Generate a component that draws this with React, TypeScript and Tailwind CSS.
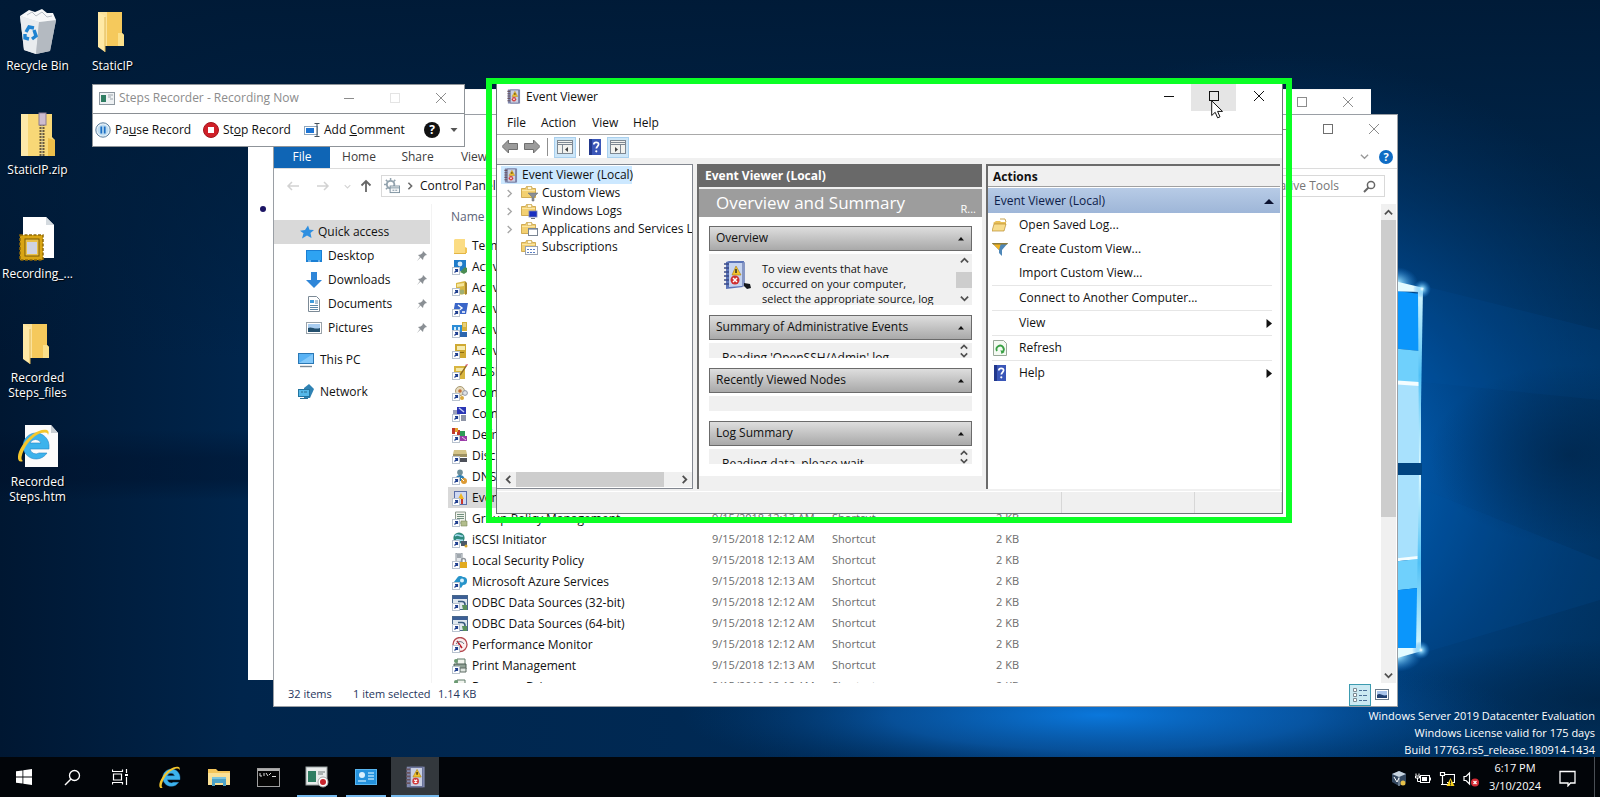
import React from "react";

type P = { children?: React.ReactNode };

/* ---------- small shared pieces ---------- */

function Svg({ size = 16, box = 16, children }: P & { size?: number; box?: number }) {
  return (
    <svg width={size} height={size} viewBox={`0 0 ${box} ${box}`} className="block shrink-0" aria-hidden="true">
      {children}
    </svg>
  );
}

function Minimise({ color }: { color: string }) {
  return (
    <Svg size={12} box={12}>
      <path d="M1 6.5h10" stroke={color} />
    </Svg>
  );
}
function Maximise({ color }: { color: string }) {
  return (
    <Svg size={12} box={12}>
      <rect x="1.5" y="1.5" width="9" height="9" fill="none" stroke={color} />
    </Svg>
  );
}
function Close({ color }: { color: string }) {
  return (
    <Svg size={12} box={12}>
      <path d="M1 1l10 10M11 1L1 11" stroke={color} />
    </Svg>
  );
}

function Chevron({ dir, color = "#505050", size = 10, w = 2 }: { dir: "up" | "down" | "left" | "right"; color?: string; size?: number; w?: number }) {
  const d = {
    up: "M1 7l4-4 4 4",
    down: "M1 3l4 4 4-4",
    left: "M7 1L3 5l4 4",
    right: "M3 1l4 4-4 4",
  }[dir];
  return (
    <Svg size={size} box={10}>
      <path d={d} fill="none" stroke={color} strokeWidth={w} />
    </Svg>
  );
}

/* ---------- wallpaper ---------- */

function Wallpaper() {
  return (
    <svg className="absolute inset-0 h-full w-full" viewBox="0 0 1600 797" preserveAspectRatio="none" aria-hidden="true">
      <defs>
        <linearGradient id="base" x1="0" y1="0" x2="1" y2="0">
          <stop offset="0" stopColor="#001732" />
          <stop offset="0.15" stopColor="#00254c" />
          <stop offset="0.5" stopColor="#002a55" />
          <stop offset="1" stopColor="#00305c" />
        </linearGradient>
        <linearGradient id="top" x1="0" y1="0" x2="0" y2="1">
          <stop offset="0" stopColor="#001a36" stopOpacity="0.95" />
          <stop offset="0.25" stopColor="#001d3b" stopOpacity="0.6" />
          <stop offset="0.45" stopColor="#001d3b" stopOpacity="0" />
        </linearGradient>
        <radialGradient id="glow" cx="1280" cy="470" r="420" gradientUnits="userSpaceOnUse">
          <stop offset="0" stopColor="#0a7ae0" />
          <stop offset="0.45" stopColor="#004f9c" stopOpacity="0.8" />
          <stop offset="1" stopColor="#003468" stopOpacity="0" />
        </radialGradient>
        <radialGradient id="under">
          <stop offset="0" stopColor="#0b7be2" stopOpacity="0.95" />
          <stop offset="0.5" stopColor="#0a5fb4" stopOpacity="0.7" />
          <stop offset="1" stopColor="#003c78" stopOpacity="0" />
        </radialGradient>
        <radialGradient id="shade">
          <stop offset="0" stopColor="#001832" stopOpacity="0.45" />
          <stop offset="1" stopColor="#001832" stopOpacity="0" />
        </radialGradient>
        <linearGradient id="band" x1="0" y1="0" x2="0" y2="1">
          <stop offset="0" stopColor="#000f28" stopOpacity="0" />
          <stop offset="0.4" stopColor="#000f28" stopOpacity="0.4" />
          <stop offset="0.7" stopColor="#000f28" stopOpacity="0.4" />
          <stop offset="1" stopColor="#000f28" stopOpacity="0" />
        </linearGradient>
        <radialGradient id="flare">
          <stop offset="0" stopColor="#ffffff" />
          <stop offset="0.25" stopColor="#8fdcff" stopOpacity="0.8" />
          <stop offset="1" stopColor="#1a86e8" stopOpacity="0" />
        </radialGradient>
        <linearGradient id="edge" x1="0" y1="0" x2="0" y2="1">
          <stop offset="0" stopColor="#d9f8ff" />
          <stop offset="0.5" stopColor="#4fc0f5" />
          <stop offset="1" stopColor="#d9f8ff" />
        </linearGradient>
      </defs>
      <rect width="1600" height="797" fill="url(#base)" />
      <rect y="430" width="420" height="70" fill="url(#band)" />
      <rect width="1600" height="797" fill="url(#top)" />
      <rect width="1600" height="797" fill="url(#glow)" />
      <path d="M1400 280L1600 330V400L1400 380Z" fill="#0058aa" opacity="0.12" />
      <path d="M1400 480L1600 560V600L1400 660Z" fill="#0058aa" opacity="0.15" />
      <ellipse cx="1570" cy="455" rx="140" ry="90" fill="url(#shade)" />
      <ellipse cx="1600" cy="700" rx="220" ry="60" fill="url(#shade)" />
      <ellipse cx="1100" cy="715" rx="420" ry="70" fill="url(#under)" />
      <ellipse cx="1396" cy="283" rx="22" ry="16" fill="url(#flare)" />
      <ellipse cx="1396" cy="656" rx="26" ry="16" fill="url(#flare)" />
      <path d="M1390 290L1420 294V351L1390 348Z" fill="#0b96fb" />
      <path d="M1390 348L1420 351V383L1390 381Z" fill="#6fd0fc" />
      <path d="M1390 384H1421V463H1390Z" fill="#a8e1fd" />
      <path d="M1390 380L1419 382V386L1390 384Z" fill="#f4fdff" />
      <rect x="1390" y="463" width="32" height="12" fill="#014480" />
      <path d="M1390 475H1421V560H1390Z" fill="#a8e1fd" />
      <path d="M1390 559L1418 556V559L1390 562Z" fill="#f4fdff" />
      <path d="M1390 562L1418 559V588L1390 591Z" fill="#6fd0fc" />
      <path d="M1390 591L1418 588V648L1390 649Z" fill="#0b96fb" />
      <path d="M1418 290L1423 288L1420 463H1419Z" fill="url(#edge)" />
      <path d="M1419 475H1421L1421 651L1416 649Z" fill="url(#edge)" />
      <path d="M1390 280L1424 288L1420 292L1390 291Z" fill="#e4fbff" />
      <path d="M1390 648L1421 648L1422 651L1390 660Z" fill="#e4fbff" />
      <circle cx="1422" cy="289" r="9" fill="url(#flare)" />
      <circle cx="1421" cy="650" r="9" fill="url(#flare)" />
    </svg>
  );
}

/* ---------- desktop icons ---------- */

function RecycleBin() {
  return (
    <Svg size={46} box={46}>
      <path d="M5 8L41 12L35 43L21 46L9 42Z" fill="#c9ced4" />
      <path d="M5 8L24 14L21 46L9 42Z" fill="#e9ecef" />
      <path d="M24 14L41 12L35 43L21 46Z" fill="#b4bac1" />
      <path d="M5 8L14 2L20 4L27 1L32 5L38 5L41 12L24 14Z" fill="#f7f8f9" />
      <path d="M12 7l5-3 4 4 6-4 5 5 5-1" fill="none" stroke="#b9bfc6" />
      <g fill="none" stroke="#1f83d1" strokeWidth="3.4">
        <path d="M11 24L14 19L19 20" />
        <path d="M19 22L21 28L17 31" />
        <path d="M14 31L10 30L10 26" />
      </g>
    </Svg>
  );
}
function BigFolder() {
  return (
    <Svg size={46} box={46}>
      <g transform="translate(-5 1)">
        <path d="M13 3H37V24L39 26V37H13Z" fill="#f5c95c" />
        <path d="M13 3H22V37H13Z" fill="#fbe29a" />
        <path d="M37 24L39 26V37H33V24Z" fill="#fbe08a" />
        <path d="M13 3L20 7V43L13 38Z" fill="#ffe9a6" />
        <path d="M20 8V43" stroke="#dfb654" />
      </g>
    </Svg>
  );
}
function ZipFolder() {
  return (
    <Svg size={46} box={46}>
      <path d="M6 2H37V25L40 28V44H6Z" fill="#f8d877" />
      <path d="M6 2H13V44H6Z" fill="#fde9a9" />
      <path d="M33 26L40 28V44H33Z" fill="#eebf4a" />
      <path d="M27 12V44" stroke="#6b5a3a" strokeWidth="5" strokeDasharray="2 1" />
      <path d="M27 12V44" stroke="#d8cfa4" strokeWidth="1" />
      <rect x="24" y="1" width="7" height="12" fill="#cdbcd0" stroke="#8c7d92" />
    </Svg>
  );
}
function Recording() {
  return (
    <Svg size={46} box={46}>
      <path d="M8 1H31L39 9V42H8Z" fill="#fff" />
      <path d="M31 1V9H39Z" fill="#d4dadf" />
      <rect x="5" y="19" width="23" height="25" fill="#d9a514" stroke="#8f6a08" strokeWidth="1.5" strokeDasharray="3 1.5" />
      <rect x="10" y="23" width="14" height="17" fill="#e9c04a" stroke="#7d5d06" />
      <rect x="12" y="26" width="10" height="12" fill="#cfd3e4" />
    </Svg>
  );
}
function IeMark() {
  return (
    <>
      <path d="M36 21A13 13 0 1 0 34 29H26A6 6 0 0 1 17 25H36Z M17 19A6 6 0 0 1 28 19Z" fill="#3db3ec" fillRule="evenodd" stroke="#2586c7" strokeWidth="0.6" />
      <path d="M10 37C4 40 3 31 9 22C16 11 27 4 34 6C36 7 36 9 35 11C35 8 32 8 28 9C20 12 13 20 10 28C8 33 8 36 10 37Z" fill="#f4c62c" />
    </>
  );
}
function HtmFile() {
  return (
    <Svg size={46} box={46}>
      <path d="M10 1H36L43 9V43H10Z" fill="#fbfbfb" />
      <path d="M36 1V9H43Z" fill="#c8ced3" />
      <g transform="translate(-2 0)">
        <IeMark />
      </g>
    </Svg>
  );
}

function DesktopIcon({ icon, label }: { icon: React.ReactNode; label: string }) {
  return (
    <button className="flex h-[104px] w-[75px] flex-col items-center gap-1 text-center text-white">
      {icon}
      <span className="w-[72px] leading-[15px] whitespace-pre-line [text-shadow:1px_1px_1px_#000]">{label}</span>
    </button>
  );
}

/* ---------- steps recorder ---------- */

function StepsRecorder() {
  return (
    <section className="absolute top-[84px] left-[92px] w-[373px] border border-[#8f9499] bg-white">
      <header className="flex h-7 items-center pb-0.5 pl-1.5 text-[#8c8c8c]">
        <Svg size={16}>
          <rect x="0.5" y="2.5" width="15" height="12" fill="#eef1f3" stroke="#8d979f" />
          <rect x="2" y="5" width="5" height="7" fill="#2f7d62" />
          <path d="M9 5h5M9 7h3M11 9h3" stroke="#9aa4ab" />
        </Svg>
        <h2 className="ml-1 flex-1 text-[12px]">Steps Recorder - Recording Now</h2>
        <button aria-label="Minimize" className="grid w-[46px] place-items-center"><Minimise color="#8c8c8c" /></button>
        <button aria-label="Maximize" className="grid w-[46px] place-items-center"><Maximise color="#e4e4e4" /></button>
        <button aria-label="Close" className="grid w-[46px] place-items-center"><Close color="#8c8c8c" /></button>
      </header>
      <div className="flex h-[33px] items-center border-t border-[#8a8f94] pr-1.5 pl-0.5 text-[12px]">
        <button className="flex w-[108px] items-center gap-1">
          <Svg size={16}>
            <circle cx="8" cy="8" r="7.2" fill="#e8f1f8" stroke="#5b7f9e" />
            <circle cx="8" cy="8" r="5.6" fill="#bcdcf2" />
            <path d="M6.3 4.5v7M9.7 4.5v7" stroke="#1c6fc4" strokeWidth="1.8" />
          </Svg>
          <span>Pa<u>u</u>se Record</span>
        </button>
        <button className="flex w-[101px] items-center gap-1">
          <Svg size={16}>
            <circle cx="8" cy="8" r="7.5" fill="#d01f28" stroke="#a3161d" />
            <rect x="5" y="5" width="6" height="6" fill="#fff" />
          </Svg>
          <span>St<u>o</u>p Record</span>
        </button>
        <button className="flex flex-1 items-center gap-1">
          <Svg size={16}>
            <rect x="0.5" y="4.5" width="13" height="8" fill="#fff" stroke="#8fa6bd" />
            <rect x="2" y="6" width="8" height="5" fill="#1d74d4" />
            <path d="M10.5 1.5h5M10.5 14.5h5M13 2v12" stroke="#45515c" />
          </Svg>
          <span>Add <u>C</u>omment</span>
        </button>
        <button aria-label="Help" className="flex items-center gap-2.5">
          <span className="grid size-4 place-items-center rounded-full bg-[#111] text-[12px] leading-4 font-bold text-white">?</span>
          <Svg size={8} box={8}><path d="M0.5 2h7L4 6z" fill="#555" /></Svg>
        </button>
      </div>
    </section>
  );
}

/* ---------- explorer ---------- */

function Shortcut() {
  return (
    <>
      <rect x="0.5" y="8.5" width="7" height="7" fill="#fff" stroke="#b9c3cf" />
      <path d="M2.5 13.5L5 11M3 10.7h2.5V13" fill="none" stroke="#1f3f8f" strokeWidth="1.2" />
    </>
  );
}

function FileGlyph({ kind }: { kind: string }) {
  switch (kind) {
    case "folder":
      return (
        <Svg><path d="M3 1h10v12l1 1v2H2V2z" fill="#fbdc83" /><path d="M13 9v6h2V10z" fill="#f0c455" /><path d="M2 15.5h12" stroke="#e3b545" /></Svg>
      );
    case "center":
      return <Svg><rect x="2" y="1" width="12" height="11" fill="#1f7cc9" /><circle cx="8" cy="5" r="2.4" fill="#d7ecfb" /><path d="M13 8l2 1v4l-3 2-4-2z" fill="#4b8c52" /><Shortcut /></Svg>;
    case "trust":
      return <Svg><path d="M4 3l9-2v13l-9 1z" fill="#d9b843" /><path d="M5 4l7-1v3l-7 1z" fill="#f5e59b" /><path d="M13 1l2 2v11l-2 1z" fill="#a8872a" /><circle cx="10" cy="12" r="2.4" fill="#9fae72" /><Shortcut /></Svg>;
    case "shell":
      return <Svg><path d="M3 2h13l-2 11H1z" fill="#3a66c8" /><path d="M6 4l4 3-4 3M10 11h3" fill="none" stroke="#fff" strokeWidth="1.4" /><Shortcut /></Svg>;
    case "sites":
      return <Svg><rect x="0" y="3" width="10" height="7" fill="#2c8cd6" /><path d="M2 5h2v3H2zM6 5h2v3H6z" fill="#d5ecfb" /><rect x="10" y="0" width="5" height="9" fill="#d5b13c" /><path d="M11 2h3M11 4h3" stroke="#fbf0bd" /><rect x="8" y="10" width="7" height="5" fill="#2d66ae" /><Shortcut /></Svg>;
    case "users":
      return <Svg><path d="M3 1h11v14H3z" fill="#cfa932" /><path d="M5 3h8v4H5z" fill="#f6ebae" /><path d="M7 9h5v1H7z" fill="#8d6d13" /><Shortcut /></Svg>;
    case "adsi":
      return <Svg><path d="M2 2h11v13H2z" fill="#d8b540" /><path d="M4 4h8v3H4z" fill="#f4e8a6" /><path d="M14 1L8 10l-1 2 2-1 6-9z" fill="#8d6a20" /><path d="M13 1l2 1 1-2z" fill="#d2415c" /><Shortcut /></Svg>;
    case "component":
      return <Svg><circle cx="8" cy="6" r="4.5" fill="#e6dcc0" stroke="#a99a72" /><circle cx="8" cy="6" r="1.8" fill="#c26e3a" /><circle cx="13" cy="8" r="2.4" fill="#dfe2e8" stroke="#9196a4" /><circle cx="10" cy="13" r="2" fill="#d9a73d" /><Shortcut /></Svg>;
    case "computer":
      return <Svg><rect x="5" y="1" width="9" height="7" fill="#2b36b5" /><path d="M7 2l5 4" stroke="#c7cdf6" strokeWidth="1.5" /><rect x="1" y="4" width="4" height="4" fill="#9aa0bb" /><rect x="9" y="9" width="5" height="6" fill="#8d93a6" /><Shortcut /></Svg>;
    case "defrag":
      return <Svg><path d="M0 1h3v6H0zM5 3h3v5H5z" fill="#c0392b" /><path d="M3 1h3v4H3z" fill="#e5a32e" /><path d="M8 4h5v5H8z" fill="#2f9b58" /><path d="M8 9h7v5H8z" fill="#9a3aa8" /><path d="M10 10l4 3" stroke="#e9c7ef" /><Shortcut /></Svg>;
    case "disk":
      return <Svg><path d="M2 2h12l1 4H1z" fill="#d5c58a" /><path d="M1 6h14v3H1z" fill="#9f9263" /><path d="M7 10h8v4H7z" fill="#4d5059" /><Shortcut /></Svg>;
    case "dns":
      return <Svg><circle cx="8" cy="3.4" r="2.8" fill="#6d8f9a" /><path d="M3 12c0-8 10-8 10 0z" fill="#2f7fb3" /><circle cx="12" cy="12" r="3" fill="#dc9a34" /><path d="M9 9l3 3" stroke="#fff" /><Shortcut /></Svg>;
    case "event":
      return <Svg><rect x="2.5" y="1.5" width="12" height="13" fill="#cfd9f2" stroke="#5a6ea8" /><path d="M9 3l3 6H6z" fill="#f0b624" /><path d="M10 9v5" stroke="#c9372c" strokeWidth="2" /><Shortcut /></Svg>;
    case "group":
      return <Svg><path d="M3.500 1h10v11h-10z" fill="#f1f2ec" stroke="#8c9a8c" /><path d="M5 3.500h7M5 5.500h7M5 7.500h7" stroke="#6f8f7d" /><path d="M9 10h6v5H9z" fill="#b2bd8c" stroke="#7c8a5c" strokeWidth="0.600" /><Shortcut /></Svg>;
    case "iscsi":
      return <Svg><circle cx="7" cy="6" r="5.6" fill="#2f8a7d" /><path d="M3 4c3-3 5 1 8 0M4 8c3-1 4 1 7 0" stroke="#a7ddf2" fill="none" strokeWidth="1.4" /><path d="M9 9h6v5H9z" fill="#4b5968" /><circle cx="14" cy="14" r="1.5" fill="#d5a52c" /><Shortcut /></Svg>;
    case "security":
      return <Svg><path d="M4 0h6v9H4z" fill="#e6e9ec" stroke="#8b949c" /><path d="M5 2h4M5 4h4" stroke="#59646e" /><rect x="8" y="9" width="7" height="6" fill="#e2aa1e" /><path d="M9.500 9V7.500a2 2 0 0 1 4 0V9" fill="none" stroke="#8f9499" strokeWidth="1.4" /><Shortcut /></Svg>;
    case "azure":
      return <Svg><path d="M5 4a4 4 0 0 1 6-1 3.500 3.500 0 0 1 4 4 4 4 0 0 1-4 4l-2 3-3-2-4-4z" fill="#2793c9" /><circle cx="10" cy="6.500" r="2" fill="#d8f0fb" /><Shortcut /></Svg>;
    case "odbc":
      return <Svg><rect x="0.500" y="0.500" width="15" height="14" fill="#dfe7ee" stroke="#48678c" /><rect x="1" y="1" width="14" height="3" fill="#3c5f96" /><path d="M6 6.500h4a3 3 0 0 1 3 3v2" fill="none" stroke="#375a7d" strokeWidth="1.600" /><path d="M10 10h5v5h-4z" fill="#58905b" /><Shortcut /></Svg>;
    case "perf":
      return <Svg><circle cx="8" cy="7.500" r="7" fill="#fbeeee" stroke="#b4494f" strokeWidth="1.300" /><path d="M5 4l5 7" stroke="#b81f2b" strokeWidth="1.600" /><path d="M4 7a4.500 4.500 0 0 1 8 0" stroke="#6b7783" fill="none" /><Shortcut /></Svg>;
    default:
      return <Svg><path d="M5 1h8v6H5z" fill="#f1f4ee" stroke="#5f7a69" /><path d="M2 6h12v5H2z" fill="#8fa094" stroke="#4d5e54" /><path d="M8 10h6v4H8z" fill="#dfe5e0" stroke="#5d6b62" /><circle cx="4" cy="3" r="2" fill="#6b9a72" /><Shortcut /></Svg>;
  }
}

type FileRow = { kind: string; name: string; date?: string; type?: string; size?: string };

const shortcut = (kind: string, name: string, minute: string): FileRow => ({
  kind,
  name,
  date: `9/15/2018 12:${minute} AM`,
  type: "Shortcut",
  size: "2 KB",
});

const FILES: FileRow[] = [
  { kind: "folder", name: "Terminal" },
  { kind: "center", name: "Active D" },
  { kind: "trust", name: "Active Di" },
  { kind: "shell", name: "Active Dir" },
  { kind: "sites", name: "Active Dire" },
  { kind: "users", name: "Active Direc" },
  { kind: "adsi", name: "ADSI Edit" },
  { kind: "component", name: "Compon" },
  { kind: "computer", name: "Comput" },
  { kind: "defrag", name: "Defrag" },
  { kind: "disk", name: "Disc" },
  { kind: "dns", name: "DNS" },
  { kind: "event", name: "Event" },
  shortcut("group", "Group Policy Management", "13"),
  shortcut("iscsi", "iSCSI Initiator", "12"),
  shortcut("security", "Local Security Policy", "13"),
  shortcut("azure", "Microsoft Azure Services", "13"),
  shortcut("odbc", "ODBC Data Sources (32-bit)", "12"),
  shortcut("odbc", "ODBC Data Sources (64-bit)", "12"),
  shortcut("perf", "Performance Monitor", "12"),
  shortcut("print", "Print Management", "13"),
  shortcut("print", "Recovery Drive", "12"),
];

function Pin() {
  return (
    <Svg size={12} box={12}>
      <path d="M7 1l4 4-2 .5-1.500 2L7 10 4.500 7.500 1 11 4 7 2 5l2.500-.5L6.500 3z" fill="#8a8f94" />
    </Svg>
  );
}

const DesktopGlyph = () => (
  <Svg><rect x="0" y="2" width="16" height="12" fill="#1a7fd4" /><rect x="1" y="3" width="14" height="9" fill="#2ea3f2" /><path d="M2 13h3M12 13h2" stroke="#bfe3fb" /></Svg>
);
const DownGlyph = () => (
  <Svg><path d="M5 0h6v8h5l-8 8-8-8h5z" fill="#2f86d8" /></Svg>
);
const DocGlyph = () => (
  <Svg><path d="M2.500 0.500h8l3 3v12h-11z" fill="#fff" stroke="#7c8a96" /><path d="M4 4h4v3H4z" fill="#3f9bdc" /><path d="M9 5h3M9 7h3M4 9.500h8M4 11.500h8M4 13.500h8" stroke="#5b87a8" /></Svg>
);
const PicGlyph = () => (
  <Svg><rect x="0.500" y="2.500" width="15" height="11" fill="#fff" stroke="#9aa3aa" /><rect x="2" y="4" width="12" height="8" fill="#a9cdf0" /><path d="M2 8c4-2 6 2 12 0v4H2z" fill="#24506e" /></Svg>
);
const PcGlyph = () => (
  <Svg><rect x="0.500" y="1.500" width="15" height="10" fill="#58b2f4" stroke="#2b78b5" /><path d="M1 11L15 2v9z" fill="#82c8fa" /><path d="M2 14.500h12" stroke="#7a8894" strokeWidth="1.400" /></Svg>
);
const NetGlyph = () => (
  <Svg><path d="M6 4l5-4 5 5-4 9H6z" fill="#2f82b3" /><rect x="0.500" y="5.500" width="11" height="7" fill="#55b8e8" stroke="#23749f" /><path d="M2 14.500h8M3 8h2M6 8h3" stroke="#2a6d90" /></Svg>
);
const StarGlyph = () => (
  <Svg size={14} box={14}><path d="M8 .5l1.500 4.300 4.500.2-3.500 3.100 1 4.900L7 10.500 2 13.500l1.500-5.200L0 5.700 5 5z" fill="#2f8fe0" /></Svg>
);

function SideItem({ icon, label, pinned }: { icon: React.ReactNode; label: string; pinned?: boolean }) {
  return (
    <a href="#" className="flex h-6 items-center gap-1.5 pr-0.5 pl-8">
      {icon}
      <span className="flex-1">{label}</span>
      {pinned && <Pin />}
    </a>
  );
}

function Explorer() {
  return (
    <section className="absolute top-[114px] right-[202px] bottom-[90px] left-[273px] flex flex-col border border-[#9a9fa5] bg-white">
      <header className="flex h-7 shrink-0 items-center justify-end">
        <button aria-label="Minimize" className="grid w-[46px] place-items-center"><Minimise color="#8c8c8c" /></button>
        <button aria-label="Maximize" className="grid w-[46px] place-items-center"><Maximise color="#6f6f6f" /></button>
        <button aria-label="Close" className="grid w-[46px] place-items-center"><Close color="#8c8c8c" /></button>
      </header>
      <nav className="flex h-[26px] shrink-0 items-stretch border-b border-[#dcdcdc] pt-0.5 text-[12px] text-[#3c3c3c]">
        <button className="w-14 bg-[#0f65b5] text-white">File</button>
        <button className="w-[58px]">Home</button>
        <button className="w-[59px]">Share</button>
        <button className="w-[54px]">View</button>
        <span className="flex-1" />
        <button aria-label="Expand the ribbon" className="mr-2.5"><Chevron dir="down" color="#9a9a9a" size={9} w={1.5} /></button>
        <button aria-label="Help" className="my-auto mr-1 grid size-3.5 place-items-center rounded-full bg-[#0f6cc4] text-[11px] leading-3.5 font-bold text-white">?</button>
      </nav>
      <div className="flex h-[34px] shrink-0 items-center pr-3 pl-3">
        <button aria-label="Back" className="mr-4"><Svg size={14} box={14}><path d="M13 7H2M6 3L2 7l4 4" fill="none" stroke="#d2d2d2" strokeWidth="1.500" /></Svg></button>
        <button aria-label="Forward" className="mr-3.5"><Svg size={14} box={14}><path d="M1 7h11M8 3l4 4-4 4" fill="none" stroke="#d2d2d2" strokeWidth="1.500" /></Svg></button>
        <button aria-label="Recent locations" className="mr-2"><Chevron dir="down" color="#d2d2d2" size={7} w={1.5} /></button>
        <button aria-label="Up" className="mr-2"><Svg size={14} box={14}><path d="M7 13V2M2.500 6.500L7 2l4.500 4.500" fill="none" stroke="#666" strokeWidth="1.800" /></Svg></button>
        <div className="flex h-[22px] flex-1 items-center border border-[#d9d9d9] pl-0.5">
          <Svg size={16} box={17}>
            <circle cx="7" cy="7" r="4" fill="none" stroke="#93a3ae" strokeWidth="2" />
            <path d="M7 0v3M7 11v3M0 7h3M2 2l2 2M12 2l-2 2M2 12l2-2" stroke="#93a3ae" strokeWidth="1.600" />
            <rect x="6.500" y="8.500" width="10" height="7" fill="#f7f9fa" stroke="#7c909e" />
            <path d="M6.500 10.500h10M9 13h2M12 13h2" stroke="#7c909e" />
          </Svg>
          <span className="mx-1.5"><Chevron dir="right" color="#6a6a6a" size={8} /></span>
          <a href="#" className="text-[12px]">Control Panel</a>
        </div>
        <label className="ml-3 flex h-[22px] w-[212px] items-center border border-[#d9d9d9] pr-2 pl-2">
          <input aria-label="Search" placeholder="Search Administrative Tools" className="w-0 flex-1 text-right text-[12px] outline-none placeholder:text-[#767676]" />
          <span className="w-6" />
          <Svg size={13} box={13}><circle cx="8" cy="5" r="3.600" fill="none" stroke="#666" strokeWidth="1.500" /><path d="M5.500 7.500L1 12" stroke="#666" strokeWidth="2" /></Svg>
        </label>
      </div>
      <div className="flex min-h-0 flex-1 pt-px">
        <aside className="w-[157px] shrink-0 border-r border-transparent pt-4 text-[12px]">
          <a href="#" className="flex h-6 items-center gap-1 bg-[#d9d9d9] pl-[26px]"><StarGlyph /><span>Quick access</span></a>
          <SideItem icon={<DesktopGlyph />} label="Desktop" pinned />
          <SideItem icon={<DownGlyph />} label="Downloads" pinned />
          <SideItem icon={<DocGlyph />} label="Documents" pinned />
          <SideItem icon={<PicGlyph />} label="Pictures" pinned />
          <a href="#" className="mt-2 flex h-6 items-center gap-1.5 pl-6"><PcGlyph /><span>This PC</span></a>
          <a href="#" className="mt-2 flex h-6 items-center gap-1.5 pl-6"><NetGlyph /><span>Network</span></a>
        </aside>
        <div className="min-w-0 flex-1 overflow-hidden border-l border-[#f3f3f3] pl-4">
          <table className="w-[571px] table-fixed text-left text-[12px]">
            <colgroup>
              <col className="w-[264px]" /><col className="w-[120px]" /><col className="w-[130px]" /><col />
            </colgroup>
            <thead>
              <tr className="h-[31px] text-[#5b6478]">
                <th className="p-0 pb-1.5 pl-[3px] font-normal">Name</th>
                <th aria-label="Date modified" />
                <th aria-label="Type" />
                <th aria-label="Size" />
              </tr>
            </thead>
            <tbody>
              {FILES.map((f) => (
                <tr key={f.name} className={f.kind === "event" ? "h-[21px] bg-[#d9d9d9]" : "h-[21px]"}>
                  <td className="p-0 pl-1">
                    <span className="flex items-center gap-1 leading-[21px] whitespace-nowrap"><FileGlyph kind={f.kind} />{f.name}</span>
                  </td>
                  <td className="p-0 text-[11px] whitespace-nowrap text-[#6c6c6c]">{f.date}</td>
                  <td className="p-0 text-[11px] text-[#6c6c6c]">{f.type}</td>
                  <td className="p-0 text-right text-[11px] text-[#6c6c6c]">{f.size}</td>
                </tr>
              ))}
            </tbody>
          </table>
        </div>
        <div className="mr-px flex w-[15px] shrink-0 flex-col items-center bg-[#f0f0f0]">
          <button aria-label="Scroll up" className="grid h-4 place-items-center"><Chevron dir="up" size={9} /></button>
          <div className="h-[297px] w-full bg-[#cdcdcd]" />
          <span className="flex-1" />
          <button aria-label="Scroll down" className="grid h-4 place-items-center"><Chevron dir="down" size={9} /></button>
        </div>
      </div>
      <footer className="flex h-[23px] shrink-0 items-center pr-2 pl-3.5 text-[11px] text-[#26355c]">
        <span className="w-[65px]">32 items</span>
        <span className="w-[85px] whitespace-nowrap">1 item selected</span>
        <span className="flex-1">1.14 KB</span>
        <button aria-label="Details view" className="grid h-[22px] w-[22px] place-items-center border border-[#3c9bb0] bg-[#cbe9f2]">
          <Svg>
            <path d="M1.500 1.500h3v3h-3zM1.500 6.500h3v3h-3zM1.500 11.500h3v3h-3z" fill="#fff" stroke="#7b8a93" />
            <path d="M7 3.500h3M11 3.500h4M7 8.500h3M11 8.500h4M7 13.500h3M11 13.500h4" stroke="#4c6f96" />
          </Svg>
        </button>
        <button aria-label="Thumbnail view" className="ml-1">
          <Svg size={14} box={14}><rect x="0.500" y="1.500" width="13" height="10" fill="#fff" stroke="#6c7c8b" /><rect x="2" y="3" width="10" height="7" fill="#a9c4ea" /><path d="M2 7c3-3 6 2 10 0v3H2z" fill="#203f6f" /></Svg>
        </button>
      </footer>
    </section>
  );
}

/* ---------- event viewer ---------- */

function BookGlyph({ size = 16 }: { size?: number }) {
  return (
    <Svg size={size}>
      <path d="M2 0.500h13v15H2z" fill="#8089ae" />
      <path d="M4.500 1h9v14h-9z" fill="#c9cfe2" stroke="#6a739b" strokeWidth="0.800" />
      <path d="M1.500 2.500h3M1.500 5h3M1.500 7.500h3M1.500 10h3M1.500 12.500h3" stroke="#6b5560" strokeWidth="1.200" />
      <path d="M9.500 2.500l3 5.500h-6z" fill="#efc02e" stroke="#b98a12" strokeWidth="0.500" />
      <path d="M9.500 4.300v2" stroke="#3c2f05" />
      <circle cx="8.500" cy="11" r="2.400" fill="#cf3a3c" />
      <path d="M7.500 10l2 2M9.500 10l-2 2" stroke="#fff" strokeWidth="0.900" />
    </Svg>
  );
}

function HelpBook() {
  return (
    <Svg>
      <rect x="2" y="0" width="12" height="16" fill="#3a56b8" />
      <rect x="2" y="0" width="3" height="16" fill="#22388c" />
      <path d="M6.800 5.500C6.800 2.600 11.600 2.600 11.600 5.300C11.600 7.200 9.300 7.400 9.300 9.600" fill="none" stroke="#fff" strokeWidth="1.700" />
      <circle cx="9.300" cy="12.300" r="1.100" fill="#fff" />
    </Svg>
  );
}

function TreeFolder({ badge }: { badge: React.ReactNode }) {
  return (
    <Svg size={17} box={17}>
      <path d="M0.500 3.500h4l1-2h5l1 2h3v9h-14z" fill="#f3d071" stroke="#c59d3e" strokeWidth="0.800" />
      <path d="M6.500 1.500h4v3h-4z" fill="#fff6d8" stroke="#c9ab5c" strokeWidth="0.600" />
      <path d="M1 5.500h13" stroke="#fbe6a4" />
      {badge}
    </Svg>
  );
}

const filterBadge = <path d="M7 8h10l-4 4v4h-2v-4z" fill="#8a8f96" stroke="#666c74" strokeWidth="0.500" />;
const monitorBadge = <><rect x="8" y="8" width="8" height="6" fill="#1b2fc0" stroke="#7b86b5" strokeWidth="0.800" /><path d="M10 15.500h4" stroke="#6a6f80" /></>;
const windowBadge = <><rect x="7.500" y="7.500" width="9" height="7" fill="#fff" stroke="#7a8593" /><path d="M8 8.500h8" stroke="#a9b3c0" /></>;
const gridBadge = <><rect x="4.500" y="7.500" width="12" height="8" fill="#fff" stroke="#9aa3b2" /><path d="M6 10.500h9M6 13.500h9" stroke="#5a7fc4" strokeDasharray="2 1" /></>;

function TreeItem({ label, badge, expandable }: { label: string; badge: React.ReactNode; expandable?: boolean }) {
  return (
    <li className="flex h-[18px] items-center pl-2">
      <span className="w-4 shrink-0">{expandable && <Chevron dir="right" color="#a6a6a6" size={9} w={1.5} />}</span>
      <TreeFolder badge={badge} />
      <span className="ml-1 whitespace-nowrap">{label}</span>
    </li>
  );
}

function Toolbar() {
  const arrow = "M0 7.500L6.500 1V4.500H15.500V10.500H6.500V14Z";
  return (
    <div className="flex h-6 items-center border-t border-[#a9a9a9] pt-px pl-[5px]">
      <button aria-label="Back" className="mr-1.5"><Svg><path d={arrow} fill="#9b9b9b" stroke="#6f6f6f" /></Svg></button>
      <button aria-label="Forward" className="mr-[7px]"><Svg><path d={arrow} transform="translate(16 0) scale(-1 1)" fill="#9b9b9b" stroke="#6f6f6f" /></Svg></button>
      <span className="mr-1.5 h-[18px] w-px bg-[#8f8f8f]" />
      <button aria-label="Show or hide the console tree" className="grid h-[21px] w-[22px] place-items-center border border-[#a9d0ee] bg-[#cde6f8]">
        <Svg><rect x="0.500" y="1.500" width="15" height="13" fill="#f2f2ee" stroke="#7e8892" /><path d="M0.500 3.500h15M0.500 5.500h15M5.500 6v8" stroke="#7e8892" /><path d="M11 8v5L8 10.500z" fill="#444" /></Svg>
      </button>
      <span className="mx-[3px] h-[18px] w-px bg-[#8f8f8f]" />
      <button aria-label="Help" className="mx-1"><HelpBook /></button>
      <button aria-label="Show or hide the action pane" className="grid h-[21px] w-[22px] place-items-center border border-[#a9d0ee] bg-[#cde6f8]">
        <Svg><rect x="0.500" y="1.500" width="15" height="13" fill="#f2f2ee" stroke="#7e8892" /><path d="M0.500 3.500h15M0.500 5.500h15M10.500 6v8" stroke="#7e8892" /><path d="M5 8v5l3-2.500z" fill="#444" /></Svg>
      </button>
    </div>
  );
}

function Panel({ title, children }: P & { title: string }) {
  return (
    <section>
      <button className="flex h-[25px] w-full items-center justify-between border border-[#6b6b6b] bg-linear-to-b from-[#dedede] to-[#a9a9a9] pr-1.5 pb-0.5 pl-1.5 text-left">
        {title}
        <Svg size={8} box={8}><path d="M1 6.500h6L4 3z" fill="#111" /></Svg>
      </button>
      <div className="mt-[3px] flex overflow-hidden bg-[#f0f0f0]">{children}</div>
    </section>
  );
}

function ClippedLine({ children }: P) {
  return (
    <div className="flex h-[15px] w-full overflow-hidden">
      <p className="flex-1 pt-1.5 pl-[13px] leading-[17px] whitespace-nowrap">{children}</p>
      <div className="flex w-4 flex-col items-center">
        <Chevron dir="up" size={8} />
        <Chevron dir="down" size={8} />
      </div>
    </div>
  );
}

function Action({ icon, label, submenu, line }: { icon?: React.ReactNode; label: string; submenu?: boolean; line?: boolean }) {
  return (
    <button className={line ? "ml-1 flex h-[25px] w-[280px] items-center border-t border-[#e6e6e6] text-left" : "ml-1 flex h-6 w-[280px] items-center text-left"}>
      <span className="w-[27px]">{icon}</span>
      <span className="flex-1">{label}</span>
      {submenu && <Svg size={9} box={9}><path d="M3.500 0v9L9 4.500z" fill="#111" /></Svg>}
    </button>
  );
}

function EventViewer() {
  return (
    <div className="absolute top-[78px] right-[308px] left-[486px] border-6 border-[#0bff25] pr-[3px] pb-[3px] pl-1">
      <section className="border border-t-0 border-[#6f747a] bg-[#f0f0f0] text-[12px]">
        <header className="flex h-[27px] items-start bg-white pl-[9px]">
          <span className="mt-[5px]"><BookGlyph size={15} /></span>
          <h1 className="flex-1 pl-[5px] leading-[26px]">Event Viewer</h1>
          <button aria-label="Minimize" className="grid h-[27px] w-[45px] place-items-center pb-[3px]"><Minimise color="#111" /></button>
          <button aria-label="Maximize" className="relative grid h-[27px] w-[45px] place-items-center bg-[#e5e5e5] pb-[3px]">
            <Maximise color="#111" />
            <svg className="absolute top-[16px] left-[20px]" width="13" height="19" viewBox="0 0 13 19" aria-hidden="true">
              <path d="M0.700 0.800V15.500L4.200 12.300L6.600 17.800L9 16.800L6.600 11.400H11.500Z" fill="#fff" stroke="#111" />
            </svg>
          </button>
          <button aria-label="Close" className="grid h-[27px] w-[46px] place-items-center pb-[3px]"><Close color="#111" /></button>
        </header>
        <nav className="flex h-[23px] items-center bg-white pl-2.5">
          <button className="w-[34px] text-left">File</button>
          <button className="w-[51px] text-left">Action</button>
          <button className="w-[41px] text-left">View</button>
          <button>Help</button>
        </nav>
        <div className="bg-white"><Toolbar /></div>
        <div className="mt-1.5 flex h-[325px]">
          <div className="flex w-[196px] shrink-0 flex-col border border-l-0 border-[#828790] bg-white">
            <ul className="flex-1 overflow-hidden pt-px">
              <li className="ml-1 flex h-[18px] w-[131px] items-center bg-[#cce8ff] pl-0.5 whitespace-nowrap"><BookGlyph size={15} /><span className="ml-1">Event Viewer (Local)</span></li>
              <TreeItem expandable label="Custom Views" badge={filterBadge} />
              <TreeItem expandable label="Windows Logs" badge={monitorBadge} />
              <TreeItem expandable label="Applications and Services Logs" badge={windowBadge} />
              <TreeItem label="Subscriptions" badge={gridBadge} />
            </ul>
            <div className="mb-px ml-[3px] flex h-[15px] items-center bg-[#f0f0f0]">
              <button aria-label="Scroll left" className="grid w-4 place-items-center"><Chevron dir="left" size={9} /></button>
              <div className="h-full w-[148px] bg-[#cdcdcd]" />
              <span className="flex-1" />
              <button aria-label="Scroll right" className="grid w-4 place-items-center"><Chevron dir="right" size={9} /></button>
            </div>
          </div>
          <div className="ml-1 flex min-w-0 flex-1 flex-col border-l-2 border-[#6b6b6b]">
            <h2 className="h-[23px] bg-[#696969] pl-1.5 leading-[23px] font-bold text-white">Event Viewer (Local)</h2>
            <div className="mt-0.5 flex h-7 items-center justify-between bg-[#9d9d9d] pr-1.5 pl-[17px] text-white">
              <h3 className="text-[17px]">Overview and Summary</h3>
              <span className="self-end text-[11px]">R...</span>
            </div>
            <div className="flex flex-col gap-2.5 bg-white px-2.5 pt-[9px] pb-3">
              <Panel title="Overview">
                <div className="flex h-[51px] w-full">
                  <span className="mt-1.5 ml-3.5 h-8 w-[39px]">
                    <Svg size={30} box={30}>
                      <path d="M3 2L6 1H21L20 27L3 29Z" fill="#5b74b8" />
                      <path d="M6 3H19V26L6 27Z" fill="#c6d4ef" />
                      <path d="M19 3L22 2V26L19 27Z" fill="#8797c4" />
                      <path d="M1 4h5M1 8h5M1 12h5M1 16h5M1 20h5M1 24h5" stroke="#3b4a86" strokeWidth="1.500" />
                      <path d="M13 6l5 9H9z" fill="#f2c42e" stroke="#a77c10" strokeWidth="0.600" />
                      <path d="M13 9v4" stroke="#222" strokeWidth="1.400" />
                      <circle cx="12" cy="20" r="4.500" fill="#cf3030" />
                      <path d="M10 18l4 4M14 18l-4 4" stroke="#fff" strokeWidth="1.500" />
                      <path d="M21 23l6 1 1 4-4 1-3-3z" fill="#16181c" />
                    </Svg>
                  </span>
                  <p className="pt-[7px] text-[11px] leading-[15px] whitespace-nowrap">
                    To view events that have
                    <br />
                    occurred on your computer,
                    <br />
                    select the appropriate source, log
                  </p>
                  <div className="ml-auto flex w-4 flex-col items-center justify-between py-0.5">
                    <Chevron dir="up" size={9} />
                    <div className="h-4 w-full bg-[#cdcdcd]" />
                    <Chevron dir="down" size={9} />
                  </div>
                </div>
              </Panel>
              <Panel title="Summary of Administrative Events"><ClippedLine>Reading 'OpenSSH/Admin' log...</ClippedLine></Panel>
              <Panel title="Recently Viewed Nodes"><div className="h-[15px]" /></Panel>
              <Panel title="Log Summary"><ClippedLine>Reading data, please wait...</ClippedLine></Panel>
            </div>
          </div>
          <div className="mr-0.5 ml-1 w-[294px] shrink-0 border-t-2 border-l-2 border-[#6b6b6b] bg-white">
            <h2 className="h-[21px] border-b border-[#a0a0a0] bg-[#f0f0f0] pl-[5px] leading-[21px] font-bold">Actions</h2>
            <button className="mt-px flex h-[25px] w-full items-center justify-between bg-linear-to-b from-[#b7cbe6] to-[#9eb6d8] pr-1.5 pl-1.5 text-[#0d1d49]">
              Event Viewer (Local)
              <Svg size={10} box={10}><path d="M0 8h10L5 3z" fill="#0b1230" /></Svg>
            </button>
            <Action label="Open Saved Log..." icon={<Svg><path d="M1 6l3-2h4l1 1h5v3H3z" fill="#e8bf58" /><path d="M0 14l2-7h12l-2 7z" fill="#f7dc8c" stroke="#b98d2f" strokeWidth="0.700" /><path d="M8 2h5l1 3" fill="none" stroke="#c9a552" /></Svg>} />
            <Action label="Create Custom View..." icon={<Svg><path d="M0 2h16l-6 7v6l-3-3V9z" fill="#4e87b8" /><path d="M0 2h9L7 9z" fill="#f0b323" /><path d="M0 2h16l-1 1.500H1z" fill="#8c7a3a" /></Svg>} />
            <Action label="Import Custom View..." />
            <Action line label="Connect to Another Computer..." />
            <Action line submenu label="View" />
            <Action line label="Refresh" icon={<Svg><path d="M1.500 0.500h10l3 3v12h-13z" fill="#f4faf2" stroke="#98a898" /><path d="M5 11a3.600 3.600 0 1 1 5.500 1" fill="none" stroke="#38a043" strokeWidth="1.800" /><path d="M8.500 10l1 4 3-2z" fill="#38a043" /></Svg>} />
            <Action line submenu label="Help" icon={<HelpBook />} />
          </div>
        </div>
        <footer className="mt-0.5 flex h-[22px] border-t border-white">
          <span className="flex-1" />
          <span className="w-[133px] border-l border-[#d7d7d7]" />
          <span className="w-[88px] border-x border-[#d7d7d7]" />
        </footer>
      </section>
    </div>
  );
}

/* ---------- taskbar ---------- */

function Task({ label, state, children }: P & { label: string; state?: "open" | "active" }) {
  const cls =
    state === "active"
      ? "grid w-12 place-items-center border-b-2 border-[#76b9ed] bg-[#33383d] pt-0.5"
      : state === "open"
        ? "mx-1 grid w-10 place-items-center border-b-2 border-[#76b9ed] pt-0.5"
        : "grid w-12 place-items-center";
  return <button aria-label={label} className={cls}>{children}</button>;
}

function Taskbar() {
  return (
    <footer className="absolute inset-x-0 bottom-0 flex h-10 bg-[#020509] text-[11px] text-white">
      <Task label="Start"><Svg><path d="M0 2.300L6.500 1.400V7.500H0zM7.300 1.300L16 0V7.500H7.300zM0 8.500H6.500V14.600L0 13.700zM7.300 8.500H16V16L7.300 14.700z" fill="#fff" /></Svg></Task>
      <Task label="Search"><Svg size={17} box={17}><circle cx="10.500" cy="6.500" r="5" fill="none" stroke="#fff" strokeWidth="1.300" /><path d="M7 10L1 16" stroke="#fff" strokeWidth="1.500" /></Svg></Task>
      <Task label="Task View"><Svg><path d="M0.500 0.500v2h10v-2M0.500 15.500v-2h10v2M1.500 5h8v6h-8zM14.500 0v4M14.500 8v8" fill="none" stroke="#fff" strokeWidth="1.200" /><rect x="13" y="5" width="3" height="2" fill="#fff" /></Svg></Task>
      <div className="ml-0.5 flex gap-px">
        <Task label="Internet Explorer"><Svg size={28} box={42}><IeMark /></Svg></Task>
        <Task label="File Explorer"><Svg size={22} box={22}><path d="M0 3h8l2 2h12v14H0z" fill="#f4c55a" /><path d="M0 7h22v12H0z" fill="#fbe196" /><path d="M4 12h14v8h-3v-3H7v3H4z" fill="#4da3c8" /><path d="M4 11h14v2H4z" fill="#7cc5df" /></Svg></Task>
        <Task label="Command Prompt"><Svg size={23} box={23}><rect x="0.500" y="2.500" width="22" height="18" fill="#050505" stroke="#a0a0a0" /><path d="M1 4h21" stroke="#e8e8e8" strokeWidth="1.500" /><path d="M3 7v3h2M7 7v3M9 7l2 3M12 9l2-2M15 10.500h4" stroke="#ddd" fill="none" /></Svg></Task>
        <Task label="Steps Recorder" state="open"><Svg size={24} box={24}><rect x="1" y="2" width="21" height="18" fill="#e9ecec" stroke="#9aa3a3" /><rect x="3" y="6" width="8" height="11" fill="#2f7d62" /><path d="M13 7h7M13 9h5" stroke="#6d7777" /><circle cx="18" cy="17" r="5" fill="#fff" stroke="#a6a6a6" /><circle cx="18" cy="17" r="3" fill="#c9252d" /></Svg></Task>
        <Task label="Administrative Tools" state="open"><Svg size={22} box={22}><rect x="0.500" y="3.500" width="21" height="15" fill="#2492dd" stroke="#57b5f0" /><circle cx="7" cy="9" r="3" fill="#d9f0fd" /><path d="M3 15h8M13 7h6M13 10h6M13 13h6" stroke="#a9dcf9" strokeWidth="1.400" /></Svg></Task>
        <Task label="Event Viewer" state="active"><BookGlyph size={22} /></Task>
      </div>
      <span className="flex-1" />
      <div className="flex items-center gap-2 pt-1">
        <Svg><path d="M8 0l7 3v8l-7 4-7-4V3z" fill="#33475f" /><path d="M1 3l7 3 7-3-7-3z" fill="#c6d3df" /><path d="M8 6v9" stroke="#9fb0c0" /><path d="M3 6l3 5 2-4" stroke="#fff" fill="none" /><circle cx="12" cy="12" r="2.500" fill="#e5c04a" /></Svg>
        <Svg><rect x="5.500" y="4.500" width="9" height="7" fill="none" stroke="#fff" /><rect x="7" y="6" width="5" height="4" fill="#fff" /><path d="M15.500 6.500v3M1 2.500v2M4 2.500v2M0.500 5h4v2h-4zM2.500 7v3.500h3" stroke="#fff" fill="none" /></Svg>
        <Svg><path d="M1.500 1.500h4v3h-4zM6 3.500h9.500v8H8M3.500 5v8M2 13.500h7" fill="none" stroke="#fff" strokeWidth="1.200" /><path d="M11.500 7l4 8h-8z" fill="#f6cf1c" /><path d="M11.500 9.500v3M11.500 13.300v1" stroke="#222" /></Svg>
        <Svg><path d="M1 5.500h2l3.500-3.500v11L3 9.500H1z" fill="none" stroke="#fff" strokeWidth="1.200" /><circle cx="12" cy="11.500" r="4" fill="#d52b35" /><path d="M10.500 10l3 3M13.500 10l-3 3" stroke="#fff" strokeWidth="1.200" /></Svg>
      </div>
      <div className="flex w-[72px] flex-col items-center justify-center leading-[18px]">
        <time>6:17 PM</time>
        <time>3/10/2024</time>
      </div>
      <button aria-label="Notifications" className="grid w-8 place-items-center pt-0.5">
        <Svg size={17} box={17}><path d="M1 1.500h15v11.500h-4.500L9 15.800V13H1z" fill="none" stroke="#fff" strokeWidth="1.300" /></Svg>
      </button>
      <span className="ml-[11px] w-[6px] border-l border-[#4a4f55]" />
    </footer>
  );
}

/* ---------- desktop ---------- */

export default function App() {
  return (
    <main className="relative h-screen w-full overflow-hidden bg-[#00203f] font-['Open_Sans','Noto_Sans',sans-serif] text-[12px] text-[#111]">
      <Wallpaper />
      <div className="relative flex pt-2">
        <div className="flex flex-col">
          <DesktopIcon icon={<RecycleBin />} label="Recycle Bin" />
          <DesktopIcon icon={<ZipFolder />} label="StaticIP.zip" />
          <DesktopIcon icon={<Recording />} label="Recording_..." />
          <DesktopIcon icon={<BigFolder />} label={"Recorded\nSteps_files"} />
          <DesktopIcon icon={<HtmFile />} label={"Recorded\nSteps.htm"} />
        </div>
        <DesktopIcon icon={<BigFolder />} label="StaticIP" />
      </div>

      <section className="absolute top-[89px] right-[229px] bottom-[117px] left-[248px] border-t border-[#f5f5f5] bg-white">
        <header className="flex h-6 items-center justify-end">
          <button aria-label="Maximize" className="grid w-[46px] place-items-center"><Maximise color="#8c8c8c" /></button>
          <button aria-label="Close" className="grid w-[46px] place-items-center"><Close color="#8c8c8c" /></button>
        </header>
        <ul className="pt-[92px] pl-3"><li className="size-1.5 rounded-full bg-[#1b1464]" /></ul>
      </section>

      <Explorer />
      <StepsRecorder />
      <EventViewer />

      <div className="absolute right-[5px] bottom-[39px] text-right text-[11px] leading-[17px] text-white">
        <p>Windows Server 2019 Datacenter Evaluation</p>
        <p>Windows License valid for 175 days</p>
        <p>Build 17763.rs5_release.180914-1434</p>
      </div>
      <Taskbar />
    </main>
  );
}
